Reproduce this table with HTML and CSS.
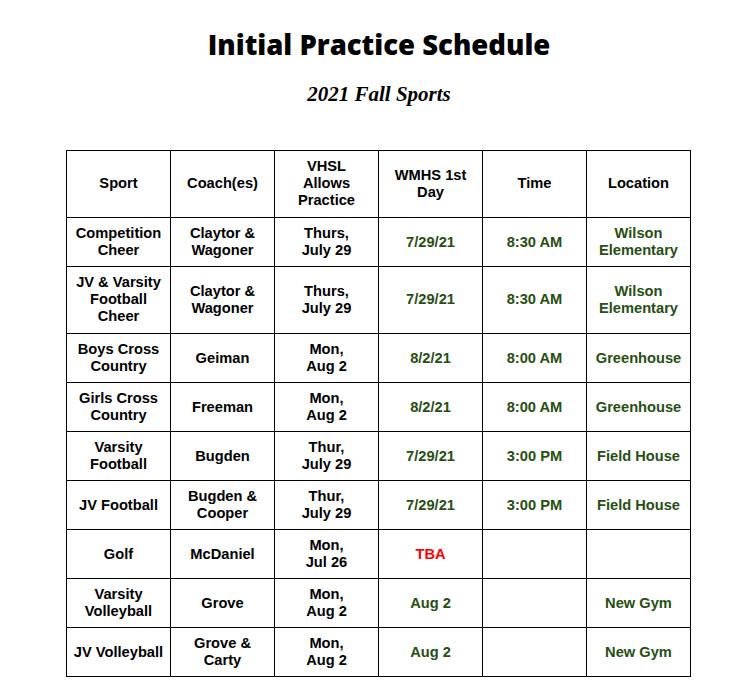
FILE: index.html
```html
<!DOCTYPE html>
<html>
<head>
<meta charset="utf-8">
<link rel="stylesheet" href="styles.css">
</head>
<body>
<div class="page">
  <h1 class="title">Initial Practice Schedule</h1>
  <h2 class="subtitle">2021 Fall Sports</h2>
  <table class="schedule">
    <colgroup>
      <col class="c"><col class="c"><col class="c"><col class="c"><col class="c"><col class="c">
    </colgroup>
    <tr class="tall">
      <td>Sport</td><td>Coach(es)</td><td>VHSL<br>Allows<br>Practice</td><td>WMHS 1st<br>Day</td><td>Time</td><td>Location</td>
    </tr>
    <tr>
      <td>Competition<br>Cheer</td><td>Claytor &amp;<br>Wagoner</td><td>Thurs,<br>July 29</td><td class="g">7/29/21</td><td class="g">8:30 AM</td><td class="g">Wilson<br>Elementary</td>
    </tr>
    <tr class="tall">
      <td>JV &amp; Varsity<br>Football<br>Cheer</td><td>Claytor &amp;<br>Wagoner</td><td>Thurs,<br>July 29</td><td class="g">7/29/21</td><td class="g">8:30 AM</td><td class="g">Wilson<br>Elementary</td>
    </tr>
    <tr>
      <td>Boys Cross<br>Country</td><td>Geiman</td><td>Mon,<br>Aug 2</td><td class="g">8/2/21</td><td class="g">8:00 AM</td><td class="g">Greenhouse</td>
    </tr>
    <tr>
      <td>Girls Cross<br>Country</td><td>Freeman</td><td>Mon,<br>Aug 2</td><td class="g">8/2/21</td><td class="g">8:00 AM</td><td class="g">Greenhouse</td>
    </tr>
    <tr>
      <td>Varsity<br>Football</td><td>Bugden</td><td>Thur,<br>July 29</td><td class="g">7/29/21</td><td class="g">3:00 PM</td><td class="g">Field House</td>
    </tr>
    <tr>
      <td>JV Football</td><td>Bugden &amp;<br>Cooper</td><td>Thur,<br>July 29</td><td class="g">7/29/21</td><td class="g">3:00 PM</td><td class="g">Field House</td>
    </tr>
    <tr>
      <td>Golf</td><td>McDaniel</td><td>Mon,<br>Jul 26</td><td class="r">TBA</td><td></td><td></td>
    </tr>
    <tr>
      <td>Varsity<br>Volleyball</td><td>Grove</td><td>Mon,<br>Aug 2</td><td class="g">Aug 2</td><td></td><td class="g">New Gym</td>
    </tr>
    <tr>
      <td>JV Volleyball</td><td>Grove &amp;<br>Carty</td><td>Mon,<br>Aug 2</td><td class="g">Aug 2</td><td></td><td class="g">New Gym</td>
    </tr>
  </table>
</div>
</body>
</html>
```

FILE: styles.css
```css
html, body {
  margin: 0;
  padding: 0;
  background: #ffffff;
}
.page {
  padding: 0 0 0 66px;
  width: 626px;
}
.title {
  margin: 28px 0 0 0;
  text-align: center;
  font-family: "Open Sans", "DejaVu Sans", sans-serif;
  font-weight: 800;
  font-size: 27.5px;
  line-height: 34px;
  color: #000;
  letter-spacing: 0;
}
.subtitle {
  margin: 19px 0 0 0;
  text-align: center;
  font-family: "Liberation Serif", serif;
  font-style: italic;
  font-weight: 700;
  font-size: 21px;
  line-height: 26px;
  color: #000;
}
.schedule {
  margin-top: 43px;
  border-collapse: collapse;
  table-layout: fixed;
  width: 625px;
  font-family: "Liberation Sans", Arial, sans-serif;
  font-weight: 700;
  font-size: 14.67px;
  line-height: 17px;
  color: #000;
}
.c { width: 104px; }
.schedule td {
  border: 1px solid #000;
  padding: 7px 2px;
  text-align: center;
  vertical-align: middle;
}
.schedule .tall td { padding-bottom: 8px; }
.schedule .g { color: #274e13; }
.schedule .r { color: #ff0000; }
```
